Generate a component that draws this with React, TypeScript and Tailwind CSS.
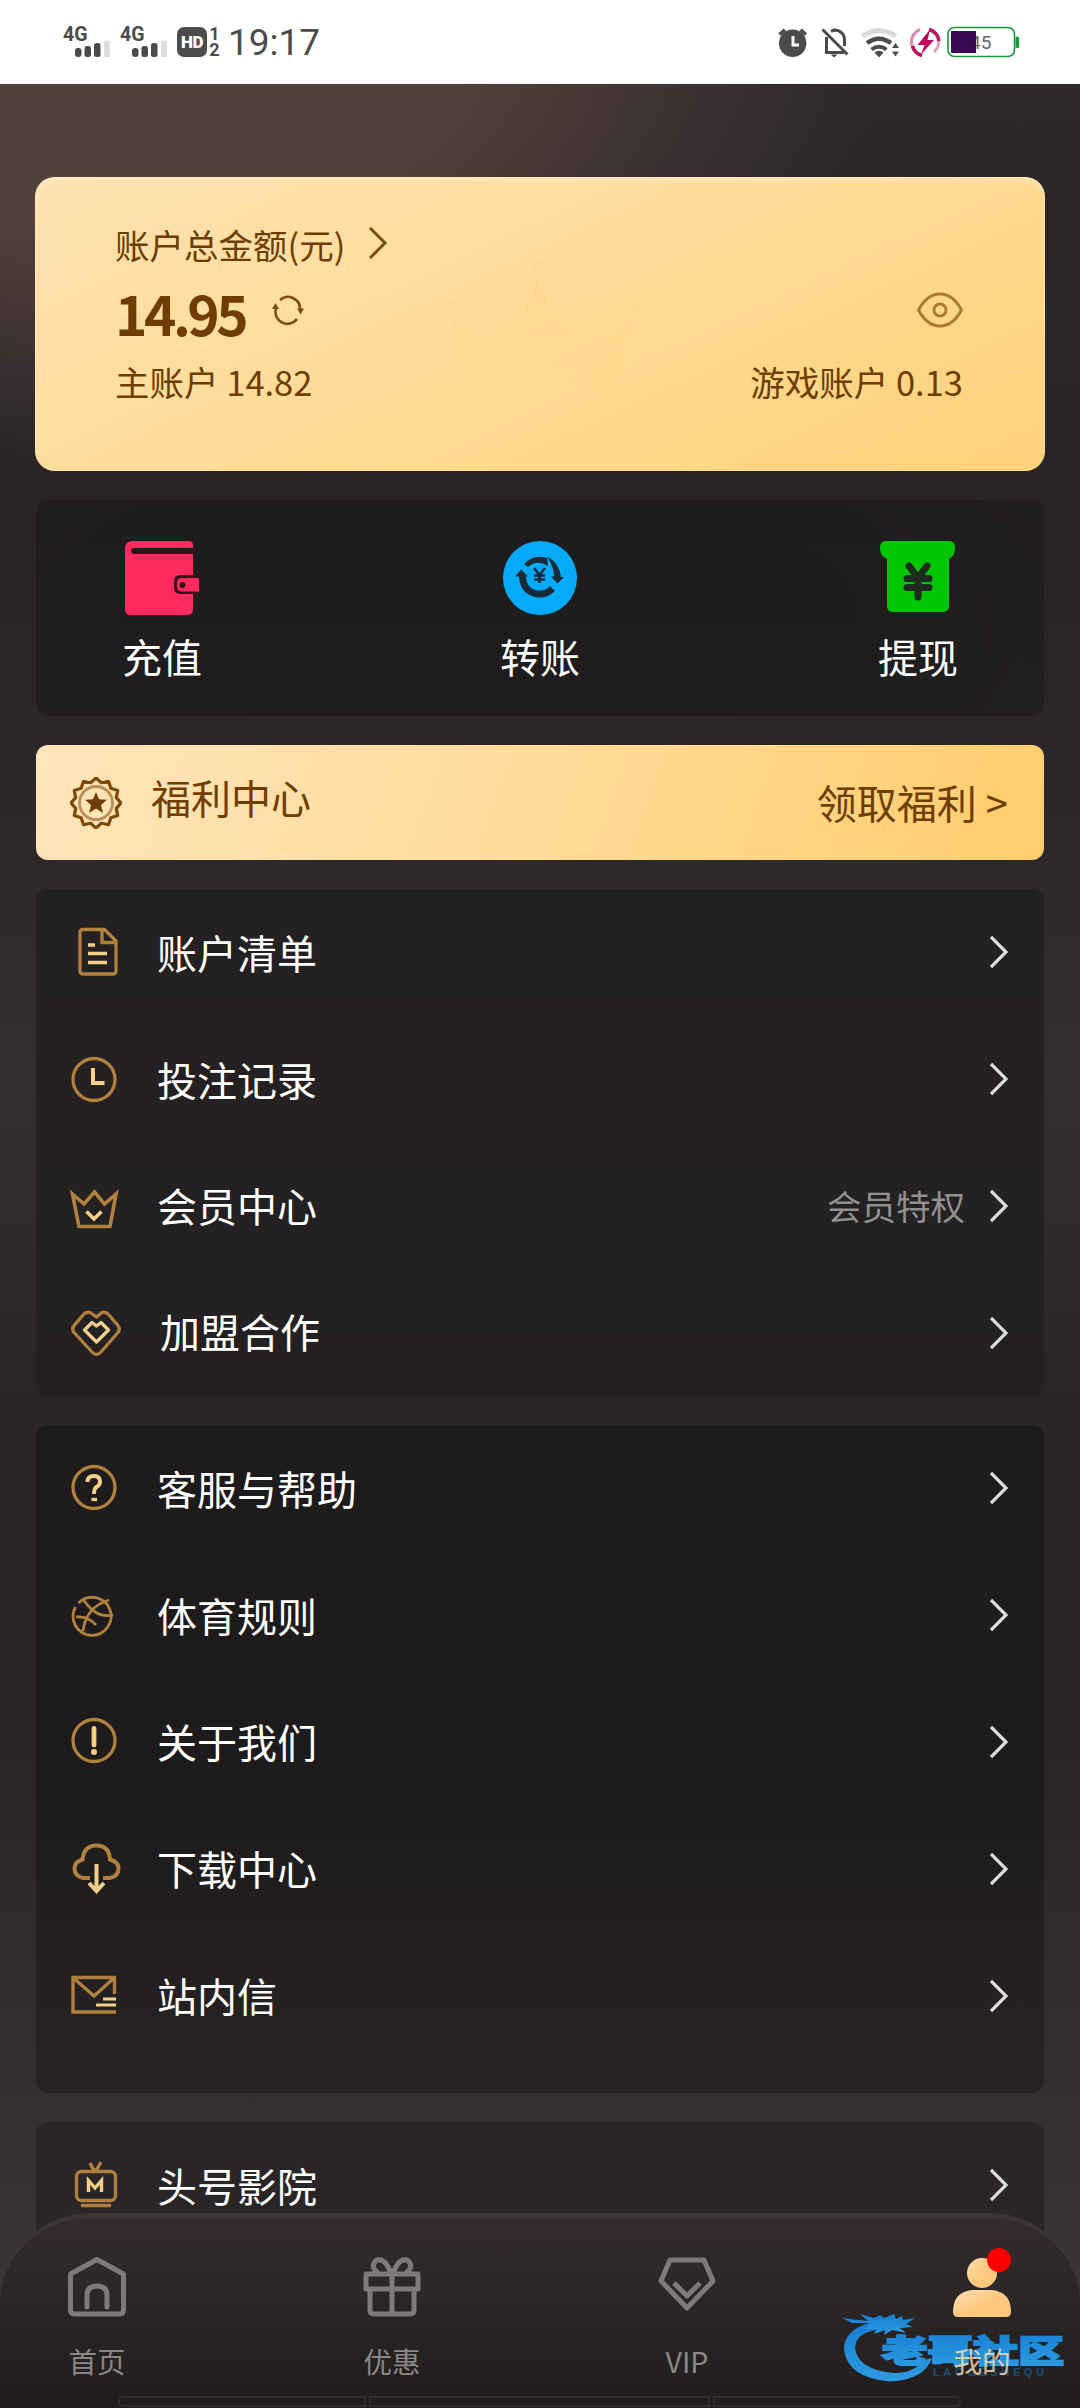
import React from "react";

const GOLD = "#b0803f";
const LIGHT = "#f3cf8a";

function Signal() {
  return (
    <svg width="50" height="36" viewBox="0 0 50 36">
      <text x="0" y="16.5" fontSize="21" fontWeight="700" fill="#4b4b4b" fontFamily="Roboto, sans-serif" textLength="24.5" lengthAdjust="spacingAndGlyphs">4G</text>
      <rect x="12" y="24" width="6.5" height="9" rx="3" fill="#4b4b4b" />
      <rect x="21.5" y="22" width="6.5" height="11" rx="2.5" fill="#4b4b4b" />
      <rect x="31" y="19" width="6.5" height="14" rx="2.5" fill="#4b4b4b" />
      <rect x="41" y="16.5" width="6" height="16.5" rx="1.5" fill="#dedede" />
    </svg>
  );
}

function StatusBar() {
  return (
    <header className="flex h-[84px] w-full items-center justify-between bg-white pr-[60px] pl-[63px]">
      <div className="flex h-9 items-center">
        <Signal />
        <div className="ml-[7px]"><Signal /></div>
        <div className="ml-[7px] flex h-[30px] w-[30px] items-center justify-center rounded-[7px] bg-[#4b4b4b] text-[17px] leading-none font-extrabold text-white" style={{ fontFamily: "Roboto, sans-serif" }}>
          <span className="font-black tracking-[-0.5px]">HD</span>
        </div>
        <div className="ml-[2px] flex w-[11px] flex-col items-center gap-[2px] text-[18px] leading-[14px] font-bold text-[#4b4b4b]" style={{ fontFamily: "Roboto, sans-serif" }}>
          <span>1</span>
          <span>2</span>
        </div>
        <span className="ml-[8px] text-[37px] leading-none text-[#4b4b4b]" style={{ fontFamily: "Roboto, sans-serif" }}>19:17</span>
      </div>
      <svg width="242" height="36" viewBox="779 24 242 36">
        <circle cx="793.7" cy="43.3" r="13.7" fill="#4b4b4b" />
        <path d="M780.5 34.5 L786 29.8 M807 34.5 L801.500 29.8" stroke="#4b4b4b" strokeWidth="3.6" />
        <path d="M794 36 V45 H800" fill="none" stroke="#fff" strokeWidth="3" />
        <g fill="none" stroke="#4b4b4b" strokeWidth="3">
          <path d="M827.5 37 V52.5 H845" />
          <path d="M832 31.500 C838 28.500 845.500 32 845.500 40 V46" />
          <path d="M823.500 29.500 L848.500 54.500" />
        </g>
        <path d="M831.500 54.500 h7 l-3.500 3 z M832 30 l4 -2 l2 4z" fill="#4b4b4b" />
        <g fill="none">
          <path d="M863.500 36 Q880.500 25.500 897 36" stroke="#dadada" strokeWidth="5" />
          <path d="M868 43 Q880 34.500 892 43" stroke="#4b4b4b" strokeWidth="4.500" />
          <path d="M872.500 49.500 Q880 44 887.500 49.500" stroke="#4b4b4b" strokeWidth="4" />
        </g>
        <path d="M875.500 52.500 Q880 49 884.500 52.500 L880 57.500Z M893 48 l3.500 -5 l3.500 5z M893 51.500 l3.500 5 l3.500 -5z" fill="#4b4b4b" />
        <path d="M922 55 A13.500 13.500 0 0 1 921 29.500" fill="none" stroke="#d98bae" strokeWidth="3" />
        <path d="M913.500 46 A13.500 13.500 0 0 0 923 55.500" fill="none" stroke="#b3175a" strokeWidth="3.500" />
        <path d="M930 29 A13.500 13.500 0 0 1 935 52" fill="none" stroke="#e3a3c0" strokeWidth="3" />
        <path d="M930 29.500 A13.500 13.500 0 0 1 940 41" fill="none" stroke="#b3175a" strokeWidth="3.500" />
        <path d="M931 29.500 L918.500 45 H925.500 L922 54.500 L935 40 H928.500Z" fill="#c2005f" />
        <rect x="949" y="27.500" width="66.500" height="29" rx="6.500" fill="#fff" stroke="#149a3b" strokeWidth="1.600" />
        <rect x="1016.500" y="36.500" width="3.600" height="11.500" rx="1.500" fill="#149a3b" />
        <text x="971" y="49" fontSize="19" fill="#666" fontFamily="Roboto, sans-serif">45</text>
        <rect x="952" y="31" width="25" height="22" fill="#33004d" fillOpacity="0.96" />
      </svg>
    </header>
  );
}

function Chevron({ color = "#dcdcdc", width = 3.2 }: { color?: string; width?: number }) {
  return (
    <svg width="20" height="34" viewBox="0 0 20 34" fill="none" stroke={color} strokeWidth={width} className="shrink-0">
      <path d="M1 2 L16 17 L1 32" />
    </svg>
  );
}

function BalanceCard() {
  return (
    <section className="relative mx-[35px] mt-[93px] h-[294px] overflow-hidden rounded-[20px] bg-linear-[155deg] from-[#ffe2b2] via-[#ffdc99] via-45% to-[#ffd27a] pt-[47px] pr-[82px] pl-[80px] text-[#6e3d02] shadow-[inset_0_4px_4px_rgba(255,240,214,0.55)]">
      <svg width="220" height="160" viewBox="0 0 220 160" className="absolute top-[76px] left-[402px]">
        <defs>
          <linearGradient id="crown" x1="0" y1="0" x2="0" y2="1">
            <stop offset="0" stopColor="#ffc96c" stopOpacity="0.2" />
            <stop offset="1" stopColor="#ffc96c" stopOpacity="0" />
          </linearGradient>
        </defs>
        <path d="M12 58 Q40 96 66 76 Q92 58 101 20 Q112 62 138 80 Q168 92 196 62 L176 150 H30Z" fill="url(#crown)" />
        <circle cx="102" cy="16" r="8" fill="url(#crown)" />
        <circle cx="12" cy="54" r="7" fill="url(#crown)" />
        <circle cx="196" cy="58" r="7" fill="url(#crown)" />
      </svg>
      <div className="relative flex h-[42px] items-center text-[34.5px]">
        <span>账户总金额(元)</span>
        <div className="ml-[24px] -mt-1"><Chevron color="#7c4d12" width={3} /></div>
      </div>
      <div className="relative mt-[8px] flex h-[76px] items-center">
        <span className="text-[55px] leading-none font-bold tracking-[-3.5px]">14.95</span>
        <svg width="32" height="32" viewBox="0 0 32 32" className="ml-[27px] -mt-1" fill="none" stroke="#7c4d12" strokeWidth="2.600">
          <path d="M8 6 A12 12 0 0 1 28 15" />
          <path d="M25 25 A12 12 0 0 1 4 14" />
          <path d="M25 14.500 h7 l-3.500 6z M0 15 h7 l-3.500 -6z" fill="#7c4d12" stroke="none" />
        </svg>
        <svg width="46" height="36" viewBox="0 0 46 36" className="-mt-1 ml-auto" fill="none" stroke="#ad7a33" strokeWidth="3">
          <path d="M1.500 18 Q10 2 23 2 Q36 2 44.500 18 Q36 34 23 34 Q10 34 1.500 18Z" />
          <circle cx="23" cy="18" r="6" />
        </svg>
      </div>
      <div className="relative mt-[11px] flex h-[42px] items-center justify-between text-[34.5px]">
        <span>主账户 14.82</span>
        <span>游戏账户 0.13</span>
      </div>
    </section>
  );
}

const actions = [
  {
    label: "充值",
    icon: (
      <svg width="76" height="76" viewBox="0 0 76 76">
        <path d="M9 1 H65 Q69 1 69 6 V69 Q69 75 63 75 H7 Q1 75 1 69 V9 Q1 1 9 1Z" fill="#ff2b5e" />
        <path d="M10 8 H72 V14 H10 Q7 14 7 11 Q7 8 10 8Z" fill="#2b1519" />
        <path d="M76 35 H57 Q50 35 50 41 V48 Q50 54 57 54 H76Z" fill="#3a1019" />
        <path d="M74 38 H58 Q53 38 53 43 V47 Q53 51.500 58 51.500 H75 V39Z" fill="#ff2b5e" />
        <circle cx="58.500" cy="45" r="3" fill="#2b1519" />
      </svg>
    ),
  },
  {
    label: "转账",
    icon: (
      <svg width="76" height="76" viewBox="0 0 76 76">
        <circle cx="38" cy="38" r="37" fill="#06aaf9" />
        <path d="M22 24 Q32 13.500 45 18 L46 26 Q35 19 26 27 Z" fill="#162a38" />
        <path d="M45 16.500 Q57 22 59 37 H62 L55.500 43.500 L49 36.500 H52 Q52 27 45 16.500Z" fill="#162a38" />
        <path d="M13 36.500 L19 29.500 L26 36.500 H24 Q24 47 33 50 Q43 52 48 46 L53 51 Q45 58.500 36 57.500 Q18 55 17 36.500Z" fill="#162a38" />
        <path d="M32 28 L37.500 35 L43 28 M37.500 34 V43 M32 35.500 H43 M32 39.500 H43" stroke="#162a38" strokeWidth="2.600" fill="none" />
      </svg>
    ),
  },
  {
    label: "提现",
    icon: (
      <svg width="76" height="76" viewBox="0 0 76 76">
        <path d="M6 1 H69 Q75 1 75 8 Q75 16 69 19 V66 Q69 72 62 72 H14 Q7 72 7 66 V19 Q0 16 0 8 Q0 1 6 1Z" fill="#00c503" />
        <path d="M29 26 L38 38 L47 26 M38 38 V57 M27 38.500 H49 M27 47.500 H49" stroke="#1f2a1f" strokeWidth="7" strokeLinecap="round" fill="none" />
      </svg>
    ),
  },
];

function Actions() {
  return (
    <section className="mx-9 mt-[29px] flex h-[216px] justify-between rounded-[12px] bg-[radial-gradient(ellipse_60%_120%_at_45%_60%,rgba(0,0,0,0.27)_0%,rgba(0,0,0,0.27)_50%,rgba(0,0,0,0.2)_100%)] px-[86px] pt-[40px]">
      {actions.map((a) => (
        <div key={a.label} className="flex w-20 flex-col items-center text-[40px] text-white">
          {a.icon}
          <span className="mt-[16px] leading-[48px] whitespace-nowrap">{a.label}</span>
        </div>
      ))}
    </section>
  );
}

function badgePath() {
  const pts: string[] = [];
  for (let i = 0; i < 24; i++) {
    const r = i % 2 ? 21 : 25;
    const a = (i * Math.PI) / 12 - Math.PI / 2;
    pts.push(`${(26 + r * Math.cos(a)).toFixed(1)},${(26 + r * Math.sin(a)).toFixed(1)}`);
  }
  return pts.join(" ");
}

function Welfare() {
  return (
    <section className="mx-9 mt-[29px] flex h-[115px] items-center rounded-[12px] bg-linear-[110deg] from-[#ffe5bb] via-[#ffdb98] via-50% to-[#ffcd6c] pr-[36px] pl-[34px] text-[40px] text-[#703d00]">
      <svg width="52" height="52" viewBox="0 0 52 52" fill="none">
        <polygon points={badgePath()} stroke="#7c4a08" strokeWidth="3.200" strokeLinejoin="round" />
        <circle cx="26" cy="26" r="16.500" stroke="#b98d55" strokeWidth="2.800" />
        <path d="M26 15 L29 22.300 L37 22.800 L31 28 L33 36 L26 31.600 L19 36 L21 28 L15 22.800 L23 22.300Z" fill="#6e3d02" />
      </svg>
      <span className="-mt-[11px] ml-[29px]">福利中心</span>
      <span className="-mt-[2px] ml-auto">领取福利 &gt;</span>
    </section>
  );
}

const icons = {
  file: (
    <>
      <path d="M17 7.500 H38.500 L50 19 V49 Q50 52 47 52 H17 Q14 52 14 49 V10.500 Q14 7.500 17 7.500Z M36 8 V20.500 H49" />
      <path d="M22 23 H29 M22 31.500 H41 M22 40.500 H41" stroke={LIGHT} strokeWidth="3.600" />
    </>
  ),
  clock: (
    <>
      <circle cx="28" cy="30.500" r="21" />
      <path d="M27 19 V34 H38.500" stroke={LIGHT} strokeWidth="4" />
    </>
  ),
  crown: (
    <>
      <path d="M6.500 18 L18 28 L28.500 16 L38.500 28 L50 18 L44 50.500 H13Z" strokeWidth="3.600" />
      <path d="M20.500 35.500 L28 43 L35.500 35.500" stroke={LIGHT} strokeWidth="3.600" />
    </>
  ),
  heart: (
    <>
      <path d="M24 9.500 Q20 8.500 17 12 L8.500 22 Q5 26 8.500 30 L26 49 Q30.500 54 35 49 L51.500 30 Q55 26 51.500 22 L43 12 Q40 8.500 36 9.500 L30.500 14Z" />
      <path d="M26 19.500 L18.500 27 L30.500 39 L42.500 27 L35 19.500 L30.500 23Z" stroke={LIGHT} strokeLinejoin="round" />
    </>
  ),
  help: (
    <>
      <circle cx="28" cy="29.500" r="21" />
      <path d="M21.500 24 Q21.500 18 28 18 Q34 18 34 23.500 Q34 27 30.500 29 Q28 30.500 28 36" stroke={LIGHT} strokeWidth="4" />
      <path d="M25.500 41.500 H31" stroke={LIGHT} strokeWidth="3.400" />
    </>
  ),
  ball: (
    <>
      <path d="M12.500 18 A19 19 0 1 1 9.500 22" strokeWidth="2.800" />
      <path d="M17 14 Q30 34 47 30 M43 15 Q20 22 17 46 M10 32 Q22 31 30 40" strokeWidth="2.800" />
    </>
  ),
  info: (
    <>
      <circle cx="28" cy="28.500" r="21" />
      <path d="M28 16.500 V33" stroke={LIGHT} strokeWidth="4.800" strokeLinecap="round" />
      <circle cx="28" cy="40" r="3" fill={LIGHT} stroke="none" />
    </>
  ),
  cloud: (
    <>
      <path d="M24 39 H17 Q8.500 37 8.500 29.500 Q8.500 23 16.500 20.500 Q18 6.500 30.500 6.500 Q43 6.500 44 20.500 Q52.500 23 52.500 29.500 Q52.500 37 44 39 H37" strokeWidth="4" />
      <path d="M30.500 25 V51 M23 44 L30.500 52 L38 44" stroke={LIGHT} strokeWidth="4" />
    </>
  ),
  mail: (
    <>
      <path d="M50 46 H7 V11.500 H48.500 V28 M8 12.500 L28 30 L47.500 12.500" strokeWidth="3.400" />
      <path d="M37 33 H50 M30 39 H50" stroke={LIGHT} strokeWidth="3.200" />
    </>
  ),
  tv: (
    <>
      <rect x="10.500" y="16.500" width="39" height="29" rx="5" />
      <path d="M24 8 L27 14 L29.500 15 M35 7 L30.500 15 M15 50.500 H45" strokeWidth="3.400" />
      <path d="M22.500 37 V25.500 L29 33 L35.500 25.500 V37" stroke={LIGHT} strokeWidth="3.400" />
    </>
  ),
};

type Item = { icon: keyof typeof icons; label: string; note?: string };

function MenuPanel({ items, className }: { items: Item[]; className: string }) {
  return (
    <section className={`mx-9 rounded-[12px] ${className}`}>
      {items.map((it) => (
        <div key={it.label} className="flex h-[126.800px] items-center pr-[34px] pl-[30px]">
          <svg width="60" height="60" viewBox="0 0 60 60" fill="none" stroke={GOLD} strokeWidth="3.300">
            {icons[it.icon]}
          </svg>
          <span className={it.icon === "heart" ? "-mt-[3px] ml-[34px] text-[40px] text-white" : "-mt-[1px] ml-[31px] text-[40px] text-white"}>{it.label}</span>
          {it.note && <span className="ml-auto text-[34.500px] text-[#918f8f]">{it.note}</span>}
          <div className={it.note ? "ml-[25px]" : "ml-auto"}><Chevron /></div>
        </div>
      ))}
    </section>
  );
}

const tabs = [
  {
    label: "首页",
    icon: <path d="M30 3.500 L56.500 18 V54 Q56.500 58 52 58 H8 Q3.500 58 3.500 54 V18Z M20 51 V39 Q20 30 30 30 Q40 30 40 39 V51" strokeLinecap="round" />,
  },
  {
    label: "优惠",
    icon: <path d="M4 18 H56 V33 H4Z M8 34 V54 Q8 58 12 58 H48 Q52 58 52 54 V34 M30 18 V58 M29 18 Q24 2 15 4 Q7 10 16 17 M31 18 Q36 2 45 4 Q53 10 44 17" />,
  },
  {
    label: "VIP",
    icon: <path d="M13 4 H47 L56 25 L30 52 L4 25Z M17 27 L30 40 L43 27" />,
  },
];

function Watermark() {
  return (
    <svg width="230" height="76" viewBox="0 0 230 76" className="absolute top-[92px] left-[840px] opacity-90">
      <defs>
        <linearGradient id="wm" x1="0" y1="0" x2="0" y2="1">
          <stop offset="0" stopColor="#1688e6" />
          <stop offset="1" stopColor="#2ea9f5" />
        </linearGradient>
      </defs>
      <g fill="url(#wm)">
        <path d="M32 12 Q3 20 4 40 Q8 68 50 71.500 Q84 70 92 48 L84 50 Q74 63 54 63 Q18 60 15 38 Q16 22 38 20Z" />
        <path d="M2 8 L18 10 L28 11 L20 4 L34 8 L40 5 L44 8 L54 4 L56 9 L62 6 L63 10 L75 8 L66 14 L73 17 L60 18 L66 23 L52 20 L44 25 L45 20 L34 24 L37 19 L26 19 L30 13 L12 13Z" />
        <text x="42" y="51.500" fontSize="31" fontWeight="900" fontFamily="'Noto Sans CJK SC', sans-serif" textLength="182" lengthAdjust="spacingAndGlyphs" stroke="url(#wm)" strokeWidth="2">老哥社区</text>
      </g>
      <text x="93" y="65.500" fontSize="11" fontWeight="700" fill="#1a567f" fontFamily="'Liberation Sans', sans-serif" textLength="111">LAOGESHEQU</text>
    </svg>
  );
}

function TabBar() {
  return (
    <nav className="absolute bottom-0 left-0 h-[195px] w-full rounded-t-[90px] border-t-[5px] border-[#3d3535] bg-linear-to-b from-[#352b2c] via-[#2b2626] via-45% to-[#211d1d] px-12 pt-[38px]">
      <Watermark />
      <div className="relative -ml-px flex justify-between text-[28.500px] leading-[40px] text-[#8a8787]">
        {tabs.map((t) => (
          <div key={t.label} className="flex w-[100px] flex-col items-center">
            <svg width="60" height="62" viewBox="0 0 60 62" fill="none" stroke="#7d7a7a" strokeWidth="5" strokeLinejoin="round">
              {t.icon}
            </svg>
            <span className="mt-[23px]">{t.label}</span>
          </div>
        ))}
        <div className="relative flex w-[100px] flex-col items-center text-[#ffdfae]">
          <svg width="60" height="62" viewBox="0 0 60 62">
            <defs>
              <linearGradient id="me" x1="0" y1="0" x2="1" y2="1">
                <stop offset="0" stopColor="#ffe0b4" />
                <stop offset="0.500" stopColor="#ffca80" />
              </linearGradient>
            </defs>
            <circle cx="30" cy="17" r="15" fill="url(#me)" />
            <path d="M20 34 H40 Q59 36 59 56 Q59 61 54 61 H6 Q1 61 1 56 Q1 36 20 34Z" fill="url(#me)" />
          </svg>
          <div className="absolute -top-[8px] left-[55px] size-6 rounded-full bg-[#ff0000]" />
          <span className="mt-[23px] opacity-80">我的</span>
        </div>
      </div>
      <div className="absolute bottom-[1px] left-[118px] flex gap-[3px]">
        <div className="h-[11px] w-[248px] rounded-l-[5px] border-2 border-[#322c2c]" />
        <div className="h-[11px] w-[341px] border-2 border-[#322c2c]" />
        <div className="h-[11px] w-[248px] rounded-r-[5px] border-2 border-[#322c2c]" />
      </div>
    </nav>
  );
}

export default function App() {
  return (
    <div className="relative h-[2408px] w-[1080px] overflow-hidden bg-[#2b2628]" style={{ fontFamily: "'Noto Sans CJK SC', sans-serif" }}>
      <div className="h-full bg-[radial-gradient(ellipse_760px_420px_at_120px_40px,#51413a_0%,#51413a_45%,#3b3031_78%,transparent_100%),linear-gradient(to_bottom,#2e292a_0,#292526_520px,#2e2a2b_900px,#342f2f_1080px,#2a2627_1400px,#2a2627_1750px,#352f30_2090px,#393435_2250px)]">
        <StatusBar />
        <main>
          <BalanceCard />
          <Actions />
          <Welfare />
          <MenuPanel
            className="mt-[29px] h-[507px] bg-[#232021]/90"
            items={[
              { icon: "file", label: "账户清单" },
              { icon: "clock", label: "投注记录" },
              { icon: "crown", label: "会员中心", note: "会员特权" },
              { icon: "heart", label: "加盟合作" },
            ]}
          />
          <MenuPanel
            className="mt-[29px] h-[668px] bg-linear-to-b from-[#1e1b1c] via-[#1e1b1c] via-55% to-[#282424]"
            items={[
              { icon: "help", label: "客服与帮助" },
              { icon: "ball", label: "体育规则" },
              { icon: "info", label: "关于我们" },
              { icon: "cloud", label: "下载中心" },
              { icon: "mail", label: "站内信" },
            ]}
          />
          <MenuPanel className="mt-[29px] h-[300px] bg-[#2a2627]" items={[{ icon: "tv", label: "头号影院" }]} />
        </main>
      </div>
      <TabBar />
    </div>
  );
}
